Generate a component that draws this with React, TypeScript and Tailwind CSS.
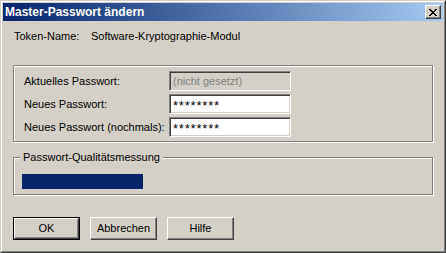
const font = { fontFamily: '"Liberation Sans", Arial, sans-serif' };

const Field = ({ value, disabled }: { value: string; disabled?: boolean }) => (
  <div
    className={`w-[122px] h-[20px] border border-t-[#808080] border-l-[#808080] border-b-white border-r-white shadow-[inset_1px_1px_0_#404040,inset_-1px_-1px_0_#d4d0c8] flex items-center pl-[3px] ${
      disabled ? "bg-[#d4d0c8] text-[#808080] text-[11px]" : "bg-white text-black text-[13px] tracking-[0.8px] pt-[3px]"
    }`}
  >
    {value}
  </div>
);

const Btn = ({ label, primary }: { label: string; primary?: boolean }) => (
  <div className={`w-[67px] h-[23px] ${primary ? "border border-black" : ""}`}>
    <div className="w-full h-full border border-t-white border-l-white border-b-[#404040] border-r-[#404040] shadow-[inset_-1px_-1px_0_#808080] flex items-center justify-center text-[11px] text-black">
      {label}
    </div>
  </div>
);

export default function App() {
  return (
    <div style={font} className="w-[446px] h-[253px] bg-[#d4d0c8]">
      <div className="w-full h-full border border-t-[#d4d0c8] border-l-[#d4d0c8] border-b-[#404040] border-r-[#404040]">
        <div className="w-full h-full border border-t-white border-l-white border-b-[#808080] border-r-[#808080] p-px flex flex-col">
          {/* title bar */}
          <div className="h-[18px] bg-gradient-to-r from-[#0a246a] to-[#a6caf0] flex items-center justify-between pl-[2px] pr-[2px]">
            <span className="text-white font-bold text-[12px]">Master-Passwort ändern</span>
            <div className="w-[16px] h-[14px] bg-[#d4d0c8] border border-t-white border-l-white border-b-[#404040] border-r-[#404040] shadow-[inset_-1px_-1px_0_#808080] flex items-center justify-center">
              <svg width="8" height="7" viewBox="0 0 8 7" shapeRendering="crispEdges">
                <path d="M0 0h2v1H0zM6 0h2v1H6zM1 1h2v1H1zM5 1h2v1H5zM2 2h4v1H2zM3 3h2v1H3zM2 4h4v1H2zM1 5h2v1H1zM5 5h2v1H5zM0 6h2v1H0zM6 6h2v1H6z" fill="#000" />
              </svg>
            </div>
          </div>

          <div className="flex flex-col px-[10px]">
            <div className="flex items-center h-[13px] mt-[9px] pl-px text-[11px] text-black">
              <span className="w-[77px]">Token-Name:</span>
              <span>Software-Kryptographie-Modul</span>
            </div>

            {/* password group */}
            <div className="mt-[22px] w-[420px] border border-[#808080] shadow-[1px_1px_0_#fff,inset_1px_1px_0_#fff] pt-[5px] pb-[4px] pl-[10px] flex flex-col gap-[3px] text-[11px] text-black">
              <div className="flex items-center">
                <span className="w-[145px]">Aktuelles Passwort:</span>
                <Field value="(nicht gesetzt)" disabled />
              </div>
              <div className="flex items-center">
                <span className="w-[145px]">Neues Passwort:</span>
                <Field value="********" />
              </div>
              <div className="flex items-center">
                <span className="w-[145px]">Neues Passwort (nochmals):</span>
                <Field value="********" />
              </div>
            </div>

            {/* quality group */}
            <div className="relative mt-[15px] w-[420px] border border-[#808080] shadow-[1px_1px_0_#fff,inset_1px_1px_0_#fff] pt-[16px] pb-[5px] pl-[8px]">
              <span className="absolute left-[6px] top-[-8px] bg-[#d4d0c8] px-[3px] text-[11px] text-black leading-[14px]">
                Passwort-Qualitätsmessung
              </span>
              <div className="w-[121px] h-[15px] bg-[#0a246a]" />
            </div>

            <div className="mt-[22px] flex gap-[10px]">
              <Btn label="OK" primary />
              <Btn label="Abbrechen" />
              <Btn label="Hilfe" />
            </div>
          </div>
        </div>
      </div>
    </div>
  );
}
